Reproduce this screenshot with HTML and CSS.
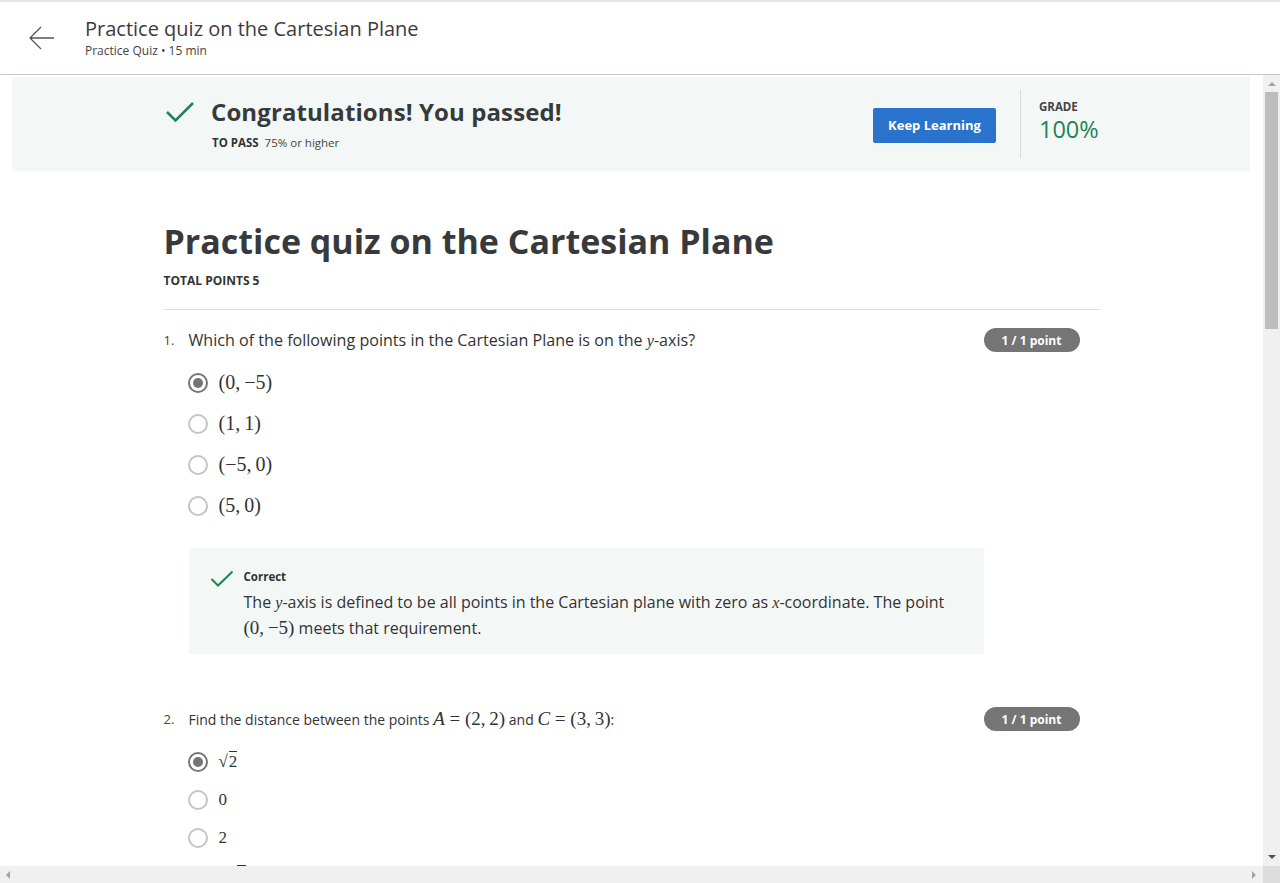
FILE: index.html
```html
<!DOCTYPE html>
<html lang="en">
<head>
<meta charset="utf-8">
<title>Practice quiz on the Cartesian Plane</title>
<link rel="stylesheet" href="styles.css">
</head>
<body>
<div class="app">
  <header class="topbar">
    <button class="back" aria-label="Back">
      <svg width="28" height="28" viewBox="0 0 28 28"><path d="M26 14H3M13 3L2 14l11 11" fill="none" stroke="#555" stroke-width="1.3"/></svg>
    </button>
    <div class="topbar-text">
      <div class="topbar-title">Practice quiz on the Cartesian Plane</div>
      <div class="topbar-sub">Practice Quiz • 15 min</div>
    </div>
  </header>
  <div class="body-row">
    <main class="viewport">
      <section class="banner">
        <div class="banner-inner">
          <svg class="banner-check" width="30" height="24" viewBox="0 0 30 24"><path d="M2 12l8.5 8.5L28 3" fill="none" stroke="#1f8354" stroke-width="2.6"/></svg>
          <div class="banner-text">
            <h2 class="banner-heading">Congratulations! You passed!</h2>
            <div class="banner-pass"><b>TO PASS</b>&nbsp; 75% or higher</div>
          </div>
          <button class="btn-primary">Keep Learning</button>
          <div class="divider"></div>
          <div class="grade">
            <div class="grade-label">GRADE</div>
            <div class="grade-value">100%</div>
          </div>
        </div>
      </section>

      <section class="quiz">
        <h1 class="quiz-title">Practice quiz on the Cartesian Plane</h1>
        <div class="total">TOTAL POINTS 5</div>
        <hr class="rule">

        <div class="question">
          <div class="q-head">
            <span class="q-num">1.</span>
            <span class="q-text">Which of the following points in the Cartesian Plane is on the <i class="m">y</i>-axis?</span>
            <span class="badge">1 / 1 point</span>
          </div>
          <ul class="options">
            <li class="opt"><span class="radio checked"></span><span class="m">(0,&#8201;−5)</span></li>
            <li class="opt"><span class="radio"></span><span class="m">(1,&#8201;1)</span></li>
            <li class="opt"><span class="radio"></span><span class="m">(−5,&#8201;0)</span></li>
            <li class="opt"><span class="radio"></span><span class="m">(5,&#8201;0)</span></li>
          </ul>
          <div class="feedback">
            <svg class="fb-check" width="24" height="18" viewBox="0 0 24 18"><path d="M1.5 9l6.5 6.5L22.5 1.5" fill="none" stroke="#1f8354" stroke-width="2"/></svg>
            <div class="fb-body">
              <div class="fb-title">Correct</div>
              <p class="fb-text">The <i class="m">y</i>-axis is defined to be all points in the Cartesian plane with zero as <i class="m">x</i>-coordinate. The point <span class="m big">(0,&#8201;−5)</span> meets that requirement.</p>
            </div>
          </div>
        </div>

        <div class="question q2">
          <div class="q-head">
            <span class="q-num small">2.</span>
            <span class="q-text small">Find the distance between the points <span class="m big"><i>A</i> = (2,&#8201;2)</span> and <span class="m big"><i>C</i> = (3,&#8201;3)</span>:</span>
            <span class="badge">1 / 1 point</span>
          </div>
          <ul class="options tight">
            <li class="opt"><span class="radio checked"></span><span class="m sm">√<span class="ov">2</span></span></li>
            <li class="opt"><span class="radio"></span><span class="m sm">0</span></li>
            <li class="opt"><span class="radio"></span><span class="m sm">2</span></li>
            <li class="opt"><span class="radio"></span><span class="m sm">2√<span class="ov">2</span></span></li>
          </ul>
        </div>
      </section>
    </main>
    <div class="vscroll">
      <span class="arrow up"></span>
      <div class="vtrack"><div class="vthumb"></div></div>
      <span class="arrow down"></span>
    </div>
  </div>
  <div class="hscroll">
    <span class="arrow left"></span>
    <div class="htrack"></div>
    <span class="arrow right"></span>
    <div class="corner"></div>
  </div>
</div>
</body>
</html>
```

FILE: styles.css
```css
* { box-sizing: border-box; }
html, body { margin: 0; padding: 0; height: 100%; overflow: hidden; }
body {
  font-family: "Open Sans", "Noto Sans", sans-serif;
  color: #333;
  background: #fff;
}
.app {
  width: 1280px;
  height: 883px;
  display: flex;
  flex-direction: column;
  border-top: 2px solid #e4e4e4;
}
.topbar {
  height: 73px;
  flex: none;
  display: flex;
  align-items: center;
  border-bottom: 1px solid #c8c8c8;
  padding-left: 28px;
}
.back {
  background: none;
  border: 0;
  padding: 0;
  width: 28px;
  height: 28px;
  margin-right: 29px;
  display: flex;
}
.topbar-text { display: flex; flex-direction: column; margin-top: -2px; }
.topbar-title { font-size: 20px; line-height: 26px; color: #3c3c3c; }
.topbar-sub { font-size: 12px; line-height: 17px; color: #444; }

.body-row { flex: 1; display: flex; min-height: 0; }
.viewport { width: 1263px; overflow: hidden; padding-top: 2px; }

.banner {
  margin: 0 13px 0 12px;
  background: #f3f8f6;
  height: 94px;
  display: flex;
  align-items: center;
}
.banner-inner {
  width: 936px;
  margin: 0 auto;
  display: flex;
  align-items: center;
  position: relative;
  left: 2px;
}
.banner-check { margin-right: 16px; margin-top: -24px; flex: none; }
.banner-text { flex: 1; }
.banner-heading {
  margin: 0 0 9px;
  font-size: 24px;
  line-height: 28px;
  font-weight: 700;
  color: #373a3c;
  letter-spacing: 0.1px;
}
.banner-pass { font-size: 11.5px; line-height: 16px; color: #444; padding-left: 1px; }
.banner-pass b { font-weight: 700; color: #333; }
.btn-primary {
  width: 123px;
  height: 35px;
  background: #2a73cc;
  color: #fff;
  border: 0;
  border-radius: 2px;
  font-family: "Open Sans", sans-serif;
  font-weight: 700;
  font-size: 13px;
  padding: 0;
  margin-top: 2px;
}
.divider { width: 1px; height: 68px; background: #dcdcdc; margin: 0 18px 0 24px; }
.grade { width: 62px; padding-bottom: 6px; }
.grade-label { font-size: 11.5px; font-weight: 700; line-height: 16px; color: #444; }
.grade-value { font-size: 23.5px; line-height: 28px; color: #1f8354; }

.quiz { width: 936px; margin: 0 auto; padding-top: 48px; }
.quiz-title {
  margin: 0;
  font-size: 34px;
  line-height: 44px;
  font-weight: 700;
  color: #373a3c;
}
.total { margin-top: 10px; font-size: 12px; line-height: 16px; font-weight: 700; color: #333; }
.rule { border: 0; border-top: 1px solid #dcdcdc; margin: 20px 0 0; }

.question { padding-top: 17px; }
.q-head { display: flex; align-items: center; height: 26px; padding-right: 20px; }
.q-num { width: 25px; font-size: 13px; color: #444; }
.q-text { flex: 1; font-size: 16.1px; color: #333; }
.q-num.small { font-size: 13px; }
.q-text.small { font-size: 14px; }
.badge {
  width: 96px;
  height: 24px;
  border-radius: 12px;
  background: #757575;
  color: #fff;
  font-size: 12px;
  font-weight: 700;
  display: flex;
  align-items: center;
  justify-content: center;
}
.m { font-family: "Liberation Serif", "DejaVu Serif", serif; white-space: nowrap; }
i.m, .m i { font-style: italic; }
.big { font-size: 19px; }
.options { list-style: none; margin: 9px 0 0; padding: 0 0 0 24px; }
.opt { display: flex; align-items: center; height: 41px; font-size: 20px; color: #333; }
.options.tight { margin-top: 11px; }
.options.tight .opt { height: 38px; }
.m.sm { font-size: 17px; }
.ov { border-top: 1px solid #333; margin-left: 1px; }
.radio {
  width: 20px;
  height: 20px;
  border-radius: 50%;
  border: 2px solid #c4c4c4;
  margin-right: 11px;
  flex: none;
  display: flex;
  align-items: center;
  justify-content: center;
}
.radio.checked { border-color: #757575; }
.radio.checked::after {
  content: "";
  width: 10px;
  height: 10px;
  border-radius: 50%;
  background: #757575;
}
.feedback {
  margin: 22px 116px 0 25px;
  background: #f3f8f6;
  display: flex;
  padding: 21px 20px 13px 21px;
}
.fb-check { flex: none; margin-right: 10px; margin-top: 1px; }
.fb-title { font-size: 11.5px; font-weight: 700; line-height: 16px; color: #333; }
.fb-text { margin: 5px 0 0; font-size: 16px; line-height: 25px; color: #333; }
.q2 { padding-top: 52px; }

.vscroll {
  width: 17px;
  background: #f0f0f0;
  display: flex;
  flex-direction: column;
  align-items: center;
}
.vtrack { flex: 1; width: 100%; padding: 0 2px; }
.vthumb { height: 237px; background: #bdbdbd; }
.arrow { width: 0; height: 0; flex: none; }
.arrow.up { border-left: 4px solid transparent; border-right: 4px solid transparent; border-bottom: 4px solid #a3a3a3; margin: 7px 0 6px; }
.arrow.down { border-left: 4px solid transparent; border-right: 4px solid transparent; border-top: 4px solid #505050; margin: 6px 0 7px; }
.hscroll {
  height: 17px;
  flex: none;
  background: #f0f0f0;
  display: flex;
  align-items: center;
}
.htrack { flex: 1; }
.arrow.left { border-top: 4px solid transparent; border-bottom: 4px solid transparent; border-right: 4px solid #a3a3a3; margin: 0 6px; }
.arrow.right { border-top: 4px solid transparent; border-bottom: 4px solid transparent; border-left: 4px solid #a3a3a3; margin: 0 7px 0 6px; }
.corner { width: 17px; height: 17px; background: #dcdcdc; }
```
